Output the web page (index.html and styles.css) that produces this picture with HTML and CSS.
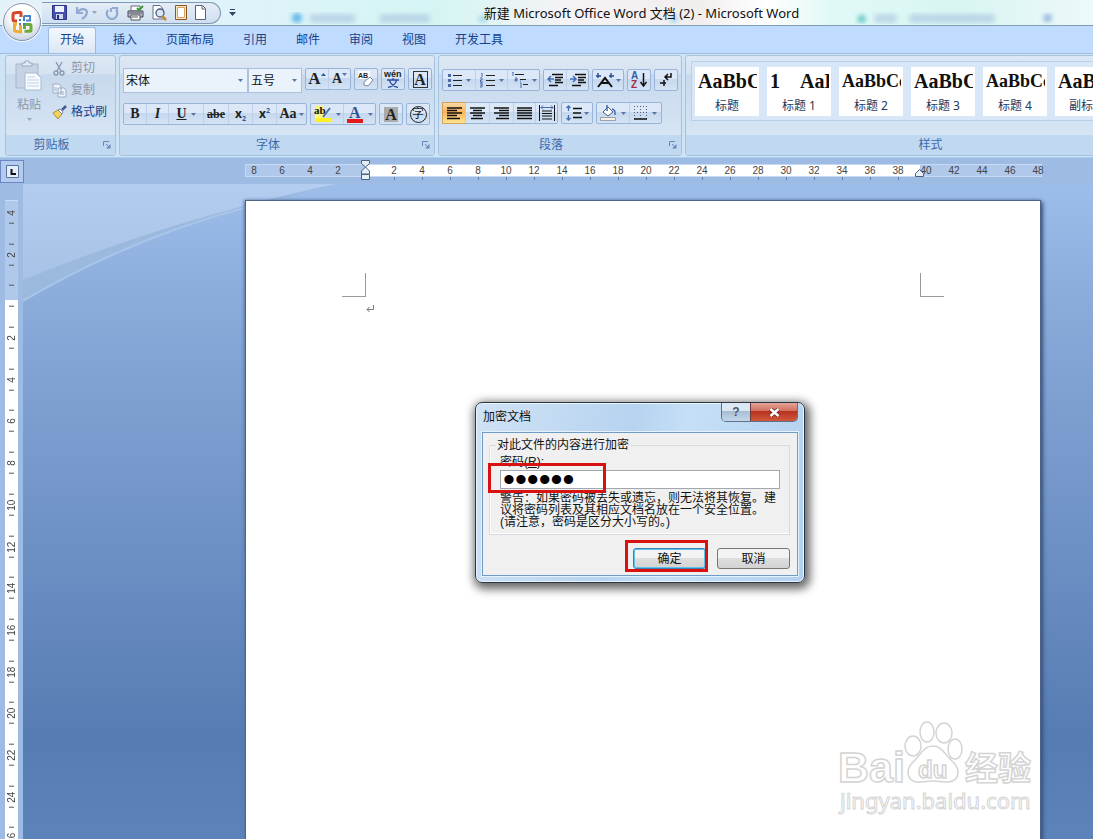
FILE: index.html
```html
<!DOCTYPE html>
<html lang="zh-CN">
<head>
<meta charset="utf-8">
<title>新建 Microsoft Office Word 文档 (2) - Microsoft Word</title>
<link rel="stylesheet" href="styles.css">
</head>
<body>
<svg class="defs" width="0" height="0" aria-hidden="true">
  <defs>
    <symbol id="down" viewBox="0 0 5 3"><path d="M0 0h5L2.500 3z" fill="#5876a3"/></symbol>
    <symbol id="launch" viewBox="0 0 8 8"><path d="M.5 5V.5H6M3 3l3 3" fill="none" stroke="#6888b5"/><path d="M7.500 3v4.500H3z" fill="#6888b5"/></symbol>
  </defs>
</svg>
<header class="titlebar">
  <button class="office" aria-label="Office">
    <svg width="24" height="24" viewBox="0 0 24 24" fill="none">
      <path d="M11 7V3.500Q11 2 9.500 2.300L4 3Q3 3.200 3 4.500V9.500Q3 11 4.500 11H7" stroke="#d6452a" stroke-width="3"/>
      <path d="M14 9V6.500Q14 6 14.500 6H20V10.500H16" stroke="#4a86cc" stroke-width="2"/>
      <path d="M7 14H4.500V20.500Q4.500 21 5.500 21.200L10.500 22V15" stroke="#f0ae35" stroke-width="3"/>
      <path d="M14.500 19V14.500H20Q21 14.500 21 15.500V20Q21 21.200 20 21.200H14.500" stroke="#6fa83a" stroke-width="3"/>
      <path d="M9 9h2v2H9zM13 9h2v2h-2zM9 13h2v2H9zM13 13h2v2h-2z" fill="#3f79c2"/>
    </svg>
  </button>
  <div class="qat">
    <button aria-label="保存"><svg width="15" height="15" viewBox="0 0 15 15"><path d="M.5 .5h14v14H2L.5 13z" fill="#454fae" stroke="#2b3384"/><path d="M3 1h9v6H3z" fill="#edf3fd"/><path d="M4 9h7v5H4z" fill="#cdd6ee"/><path d="M5 10h2v4H5z" fill="#28306f"/></svg></button>
    <button aria-label="撤消"><svg width="14" height="14" viewBox="0 0 14 14"><path d="M2 1v6h6M2 7c3-5 9-5 10-1 0 3-2 5-5 7" fill="none" stroke="#91acd0" stroke-width="2.200"/></svg></button>
    <svg class="arr" width="5" height="3"><use href="#down"/></svg>
    <button aria-label="恢复"><svg width="14" height="14" viewBox="0 0 14 14"><path d="M3 4C0 8 3 13 7 13s7-5 4-9M7 2h5v5M6 6V2" fill="none" stroke="#91acd0" stroke-width="2.200"/></svg></button>
    <button aria-label="打印"><svg width="17" height="16" viewBox="0 0 17 16"><path d="M4 1h9v5H4z" fill="#fff" stroke="#667"/><path d="M1 6h15v6H1z" fill="#b6bcc6" stroke="#454b58"/><path d="M4 10h9v5H4z" fill="#fff" stroke="#555"/><path d="M5 12h6M2 8h13" stroke="#556"/><path d="M10 3l2 2 4-4" fill="none" stroke="#3f9a36" stroke-width="2"/></svg></button>
    <button aria-label="打印预览"><svg width="15" height="16" viewBox="0 0 15 16"><path d="M1 .5h7L11 4v10H1z" fill="#fff" stroke="#667089"/><circle cx="8" cy="8" r="4" fill="#d6e8f8" stroke="#4a5a78" stroke-width="1.300"/><path d="M10 11l4 4" stroke="#c18637" stroke-width="2.500"/></svg></button>
    <button aria-label="页面"><svg width="12" height="15" viewBox="0 0 12 15"><path d="M.5 .5h11v14H.5z" fill="#f8e6c4" stroke="#85552c"/><path d="M2.500 2.500h7v10h-7z" fill="#fff" stroke="#dba35c"/></svg></button>
    <button aria-label="新建"><svg width="11" height="15" viewBox="0 0 11 15"><path d="M.5 .5h7l3 3v11H.5z" fill="#fff" stroke="#566179"/><path d="M7 1v3h3" fill="none" stroke="#566179"/></svg></button>
  </div>
  <button class="more" aria-label="自定义快速访问工具栏"><svg width="7" height="7" viewBox="0 0 7 7"><path d="M1 0h5v1H1zM0 3h7L3.500 7z" fill="#2f4468"/></svg></button>
  <svg class="glow" width="853" height="24" viewBox="0 0 853 24" preserveAspectRatio="none" aria-hidden="true">
    <defs><filter id="b"><feGaussianBlur stdDeviation="2.500"/></filter></defs>
    <g filter="url(#b)"><path d="M70 14h45v9H70zM140 14h50v9h-50zM635 14h22v9h-22zM670 14h85v9h-85z" fill="#9db8dc" opacity=".5"/><circle cx="57" cy="18" r="5" fill="#5fb5e6"/><circle cx="243" cy="19" r="4" fill="#9fd8ea"/><circle cx="434" cy="19" r="4" fill="#9fd8ea"/><circle cx="622" cy="19" r="4" fill="#5fc5c6"/><circle cx="808" cy="18" r="4" fill="#8db0dc"/></g>
  </svg>
  <h1>新建 Microsoft Office Word 文档 (2) - Microsoft Word</h1>
</header>
<nav class="tabs">
  <a href="#home" class="on">开始</a><a href="#ins">插入</a><a href="#lay">页面布局</a><a href="#ref">引用</a><a href="#mail">邮件</a><a href="#rev">审阅</a><a href="#view">视图</a><a href="#dev">开发工具</a>
</nav>
<section class="ribbon">
  <div class="group clip">
    <div class="body">
      <button class="paste" disabled><svg width="28" height="32" viewBox="0 0 28 32"><path d="M1 4h22v24H1z" fill="#c6d3e4" stroke="#a9b8cd"/><path d="M7 6V3h3V1h4v2h3v3z" fill="#e4ebf5" stroke="#98a8bf"/><path d="M10 13h11l5 5v12H10z" fill="#f7faff" stroke="#a9b8cf"/><path d="M12 17h8M12 20h12M12 23h12M12 26h12" stroke="#c4d0e2"/></svg><span>粘贴</span><svg width="5" height="3" opacity=".5"><use href="#down"/></svg></button>
      <div class="cmds">
        <button disabled><svg width="15" height="15" viewBox="0 0 15 15" fill="none" stroke="#8b9ab3" stroke-width="1.400"><path d="M4 1l5 9M10 1L5 10"/><circle cx="4" cy="12" r="2"/><circle cx="10" cy="12" r="2"/></svg>剪切</button>
        <button disabled><svg width="15" height="15" viewBox="0 0 15 15" fill="#eef3fb" stroke="#9dabc2"><path d="M1 1h6l2 2v7H1zM6 5h6l2 2v7H6z"/><path d="M2 5h3M2 7h3M8 9h4M8 11h4"/></svg>复制</button>
        <button><svg width="15" height="15" viewBox="0 0 15 15"><path d="M1 8l5-3 4 4-4 5z" fill="#f2d45c" stroke="#b78d2c"/><path d="M6 5l4 4 1-2-3-3z" fill="#fff" stroke="#7886a5"/><path d="M10 5l4-4" stroke="#4a5a92" stroke-width="2.500"/></svg>格式刷</button>
      </div>
    </div>
    <div class="cap"><span>剪贴板</span><button aria-label="剪贴板选项"><svg width="8" height="8"><use href="#launch"/></svg></button></div>
  </div>

  <div class="group font">
    <div class="body rows">
      <div class="row">
        <span class="combos"><span class="combo wide"><select aria-label="字体"><option>宋体</option></select><svg width="5" height="3"><use href="#down"/></svg></span><span class="combo"><select aria-label="字号"><option>五号</option></select><svg width="5" height="3"><use href="#down"/></svg></span></span>
        <span class="set"><button class="se" aria-label="增大字体"><b class="t16">A</b><svg class="top" width="5" height="3" viewBox="0 0 5 3"><path d="M0 3h5L2.500 0z" fill="#2c5a9c"/></svg></button><button class="se" aria-label="缩小字体"><b>A</b><svg class="top" width="5" height="3"><use href="#down"/></svg></button></span>
        <span class="set"><button aria-label="清除格式"><svg width="18" height="18" viewBox="0 0 18 18"><path d="M1 1h12v8H1z" fill="#fff"/><text x="1" y="8" class="tiny">AB</text><path d="M7 12l6-5 3 3-5 6-4-1z" fill="#fff" stroke="#7686a2"/></svg></button></span>
        <span class="set"><button aria-label="拼音指南"><svg width="18" height="18" viewBox="0 0 18 18"><text x="0" y="7" class="wen">wén</text><path d="M3 10h12M9 8v2M5.500 10.500c1 3 4 6 8.500 7M12.500 10.500c-1 3-4 6-8.500 7" fill="none" stroke="#2c4fa8" stroke-width="1.300"/></svg></button></span>
        <span class="set"><button class="se" aria-label="字符边框"><b class="boxed">A</b></button></span>
      </div>
      <div class="row">
        <span class="set"><button class="se" aria-label="加粗"><b>B</b></button><button class="se" aria-label="倾斜"><b><i>I</i></b></button><button class="se dd" aria-label="下划线"><b><u>U</u></b><svg width="5" height="3"><use href="#down"/></svg></button><button class="se w25" aria-label="删除线"><b class="t12"><s>abe</s></b></button><button class="w24" aria-label="下标"><b>x<sub>2</sub></b></button><button class="w24" aria-label="上标"><b>x<sup>2</sup></b></button><button class="se w30" aria-label="更改大小写"><b>Aa</b><svg width="5" height="3"><use href="#down"/></svg></button></span>
        <span class="set"><button class="w32" aria-label="突出显示"><svg width="18" height="18" viewBox="0 0 18 18"><path d="M1 1h9v12H1z" fill="#fbf67a"/><text x="0" y="9" class="hl">ab</text><path d="M9 12l7-9" stroke="#506fa5" stroke-width="2"/><path d="M1 13h16v4H1z" fill="#ffef24"/></svg><svg width="5" height="3"><use href="#down"/></svg></button><button class="w32" aria-label="字体颜色"><svg width="18" height="18" viewBox="0 0 18 18"><text x="3" y="13" class="fc">A</text><path d="M1 14h16v4H1z" fill="#e3191b"/></svg><svg width="5" height="3"><use href="#down"/></svg></button></span>
        <span class="set"><button class="se" aria-label="字符底纹"><b class="shade">A</b></button></span>
        <span class="set"><button aria-label="带圈字符"><span class="ring">字</span></button></span>
      </div>
    </div>
    <div class="cap"><span>字体</span><button aria-label="字体选项"><svg width="8" height="8"><use href="#launch"/></svg></button></div>
  </div>

  <div class="group para">
    <div class="body rows">
      <div class="row">
        <span class="set"><button class="w32" aria-label="项目符号"><svg width="14" height="15" viewBox="0 0 14 15"><path d="M5 2.500h9M5 7.500h9M5 12.500h9" stroke="#222"/><path d="M0 1h3v3H0zM0 6h3v3H0zM0 11h3v3H0z" fill="#4a6da8"/></svg><svg width="5" height="3"><use href="#down"/></svg></button><button class="w32" aria-label="编号"><svg width="15" height="15" viewBox="0 0 15 15"><path d="M6 2.500h9M6 7.500h9M6 12.500h9" stroke="#222"/><path d="M1 0h1v4M0 5h2v2H.5v2H3M0 10h2v4H0M0 12h2" fill="none" stroke="#4a6da8"/></svg><svg width="5" height="3"><use href="#down"/></svg></button><button class="w32" aria-label="多级列表"><svg width="17" height="16" viewBox="0 0 17 16"><path d="M4 2.500h9M9 7.500h6M12 12.500h5" stroke="#222"/><path d="M1 0h1v4M4 6h2v3H4V7.500h2M9 11h1v5M9 9h1" fill="none" stroke="#4a6da8"/></svg><svg width="5" height="3"><use href="#down"/></svg></button></span>
        <span class="set"><button aria-label="减少缩进"><svg width="16" height="14" viewBox="0 0 16 14"><path d="M5 1.500h11M8 4.500h8M8 7h6M8 9.500h8M2 12.500h9" stroke="#111" stroke-width="1.500"/><path d="M7 6H2M4 3L1 6l3 3" stroke="#426db4" stroke-width="1.500" fill="none"/></svg></button><button aria-label="增加缩进"><svg width="16" height="14" viewBox="0 0 16 14"><path d="M5 1.500h11M8 4.500h8M8 7h6M8 9.500h8M2 12.500h9" stroke="#111" stroke-width="1.500"/><path d="M0 6h6M3 3l3 3-3 3" stroke="#426db4" stroke-width="1.500" fill="none"/></svg></button></span>
        <span class="set"><button class="w30" aria-label="中文版式"><svg width="18" height="15" viewBox="0 0 18 15"><path d="M2 14l7-9 7 9M5 10h8" fill="none" stroke="#111" stroke-width="2"/><path d="M0 3h5M2 0v5M13 3h5M15 0v5" stroke="#214c91" stroke-width="1.400"/></svg><svg width="5" height="3"><use href="#down"/></svg></button></span>
        <span class="set"><button aria-label="排序"><svg width="16" height="18" viewBox="0 0 16 18"><text x="0" y="8" class="az a">A</text><text x="0" y="17" class="az z">Z</text><path d="M12.500 2v13M9.500 11l3 4 3-4" fill="none" stroke="#111" stroke-width="1.500"/></svg></button></span>
        <span class="set"><button aria-label="编辑标记"><svg width="12" height="14" viewBox="0 0 12 14"><path d="M11 0v4H6M8 1L5 4l3 3M0 10h6M4 7v6" fill="none" stroke="#111" stroke-width="1.500"/></svg></button></span>
      </div>
      <div class="row">
        <span class="set"><button class="sel" aria-label="左对齐"><svg width="15" height="13" viewBox="0 0 15 13"><path d="M0 1h15M0 3.500h10M0 6h15M0 8.500h10M0 11.500h13" stroke="#111" stroke-width="1.300"/></svg></button><button class="w24" aria-label="居中"><svg width="15" height="13" viewBox="0 0 15 13"><path d="M0 1h15M3 3.500h9M0 6h15M3 8.500h9M1 11.500h12" stroke="#111" stroke-width="1.300"/></svg></button><button class="w24" aria-label="右对齐"><svg width="15" height="13" viewBox="0 0 15 13"><path d="M0 1h15M5 3.500h10M0 6h15M5 8.500h10M2 11.500h13" stroke="#111" stroke-width="1.300"/></svg></button><button aria-label="两端对齐"><svg width="15" height="13" viewBox="0 0 15 13"><path d="M0 1h15M0 3.500h15M0 6h15M0 8.500h15M0 11.500h15" stroke="#111" stroke-width="1.300"/></svg></button><button aria-label="分散对齐"><svg width="16" height="16" viewBox="0 0 16 16"><path d="M.5 0v16M15.500 0v16M3 6h10M3 8.500h10M3 11h10M3 14h10" stroke="#111"/><path d="M2 2.500h12M4 .5l-2 2 2 2M12 .5l2 2-2 2" fill="none" stroke="#426db4"/></svg></button></span>
        <span class="set"><button class="w30" aria-label="行距"><svg width="16" height="16" viewBox="0 0 16 16"><path d="M7 3.500h9M7 8h8M7 12.500h9" stroke="#111" stroke-width="1.500"/><path d="M2.500 1v5M.5 3l2-2 2 2M2.500 10v5M.5 13l2 2 2-2" fill="none" stroke="#426db4" stroke-width="1.300"/></svg><svg width="5" height="3"><use href="#down"/></svg></button></span>
        <span class="set"><button class="w32" aria-label="底纹"><svg width="17" height="16" viewBox="0 0 17 16"><path d="M3 7l5-5 5 5-5 4z" fill="#fff" stroke="#4b5b75"/><path d="M7 0v6M12 4c4 1 3 4 3 6" fill="none" stroke="#426db4" stroke-width="1.500"/><path d="M.5 12.500h15v3H.5z" fill="#f5efe0" stroke="#9aa3b4"/></svg><svg width="5" height="3"><use href="#down"/></svg></button><button class="w32" aria-label="边框"><svg width="14" height="14" viewBox="0 0 14 14"><path d="M.5 0v13M6.500 0v13M12.500 0v13M0 .5h13M0 6.500h13" stroke="#52627c" stroke-dasharray="1 2"/><path d="M0 13h13" stroke="#111" stroke-width="1.500"/></svg><svg width="5" height="3"><use href="#down"/></svg></button></span>
      </div>
    </div>
    <div class="cap"><span>段落</span><button aria-label="段落选项"><svg width="8" height="8"><use href="#launch"/></svg></button></div>
  </div>

  <div class="group styles">
    <div class="body">
      <div class="gallery">
        <button><b>AaBbC</b><span>标题</span></button>
        <button><b>1 &nbsp; &nbsp;AaB</b><span>标题 1</span></button>
        <button><b class="two">AaBbCc</b><span>标题 2</span></button>
        <button><b>AaBbC</b><span>标题 3</span></button>
        <button><b class="two">AaBbCc</b><span>标题 4</span></button>
        <button><b>AaBb</b><span>副标题</span></button>
      </div>
    </div>
    <div class="cap"><span>样式</span></div>
  </div>
</section>

<div class="hbar">
  <button class="tabstop" aria-label="制表符"><svg width="13" height="13" viewBox="0 0 13 13"><path d="M.5 .5h12v12H.5z" fill="#e4edfa" stroke="#5b74a8"/><path d="M5.500 4v5H10" fill="none" stroke="#111" stroke-width="2"/></svg></button>
  <div class="hruler">
    <div class="nums"><span>8</span><span>6</span><span>4</span><span>2</span></div>
    <div class="nums lit"><span>2</span><span>4</span><span>6</span><span>8</span><span>10</span><span>12</span><span>14</span><span>16</span><span>18</span><span>20</span><span>22</span><span>24</span><span>26</span><span>28</span><span>30</span><span>32</span><span>34</span><span>36</span><span>38</span></div>
    <div class="nums tail"><span>40</span><span>42</span><span>44</span><span>46</span><span>48</span></div>
    <svg class="indent" width="9" height="20" viewBox="0 0 9 20" fill="#e6eef8" stroke="#4d607d"><path d="M.5 .5h8v3l-4 3.500-4-3.500zM.5 14v-3l4-4 4 4v3zM.5 14.500h8v5h-8z"/></svg>
    <svg class="rindent" width="9" height="8" viewBox="0 0 9 8" fill="#e6eef8" stroke="#4d607d"><path d="M.5 7.500V4.500l4-4 4 4v3z"/></svg>
  </div>
</div>

<main class="work">
  <div class="vbar"><div class="vruler">
    <span>4</span><span>2</span><span></span><span>2</span><span>4</span><span>6</span><span>8</span><span>10</span><span>12</span><span>14</span><span>16</span><span>18</span><span>20</span><span>22</span><span>24</span><span>26</span>
  </div></div>
  <div class="canvas">
    <svg class="wave" width="320" height="120" viewBox="0 0 320 120" aria-hidden="true"><defs><linearGradient id="w" x2="0" y2="1"><stop stop-color="#b3cdf0"/><stop offset="1" stop-color="#a7c2e6"/></linearGradient></defs><path d="M0 117Q105 55 224 23L313 0H0z" fill="#9bb9df"/><path d="M0 96Q110 51 224 21Q270 9 313 0H0z" fill="url(#w)"/><path d="M0 117Q105 55 224 23" fill="none" stroke="#a9c5e9" stroke-width="2"/></svg>
    <article class="page">
      <div class="marks"><i class="mark l"></i><i class="mark r"></i></div>
      <p class="pilcrow"><svg width="8" height="8" viewBox="0 0 8 8" fill="none" stroke="#777"><path d="M7.500 0v4.500H1M3.500 2L1 4.500 3.500 7"/></svg></p>
      <svg class="mark-logo" width="202" height="102" viewBox="0 0 202 102">
        <g fill="#fff" stroke="#d4d4d4" stroke-width="1.500">
          <text x="0" y="67" class="bai">Bai</text>
          <ellipse cx="75" cy="31" rx="8" ry="10"/><ellipse cx="89" cy="17" rx="7" ry="10"/><ellipse cx="106" cy="18" rx="8" ry="10"/><ellipse cx="117" cy="34" rx="7" ry="10"/>
          <path d="M95 31c9 0 12 9 19 15 9 8 8 20-4 21-7 0-9-1-15-1s-9 1-16 1c-10-1-12-12-4-20 8-7 10-16 20-16z"/>
          <text x="80" y="63" class="du">du</text><text x="127" y="65" class="jy">经验</text><text x="2" y="94" class="url">jingyan.baidu.com</text>
        </g>
      </svg>
    </article>
  </div>
</main>

<section class="dialog" role="dialog" aria-labelledby="dt">
  <header><h2 id="dt">加密文档</h2><div class="ctl"><button aria-label="帮助">?</button><button class="x" aria-label="关闭"><svg width="11" height="9" viewBox="0 0 11 9"><path d="M1.500 1l8 7M9.500 1l-8 7" stroke="#5c2420" stroke-width="4"/><path d="M1.500 1l8 7M9.500 1l-8 7" stroke="#fff" stroke-width="2.500"/></svg></button></div></header>
  <form>
    <fieldset>
      <legend>对此文件的内容进行加密</legend>
      <label for="pw">密码(<u>R</u>):</label>
      <input id="pw" type="password" value="123456">
      <p>警告：如果密码被丢失或遗忘，则无法将其恢复。建<br>议将密码列表及其相应文档名放在一个安全位置。<br>(请注意，密码是区分大小写的。)</p>
    </fieldset>
    <div class="acts"><button type="button" class="ok">确定</button><button type="button">取消</button></div>
  </form>
  <i class="box b1"></i><i class="box b2"></i>
</section>
</body>
</html>
```
FILE: styles.css
```css
* { box-sizing: border-box; }
body {
  margin: 0; height: 100vh; overflow: hidden; display: flex; flex-direction: column; position: relative;
  font: 12px/16px "Noto Sans", "Noto Sans CJK SC", sans-serif; color: #15428b; background: #bfdbff;
}
button { font: inherit; color: inherit; border: 0; padding: 0; margin: 0; background: none; }
svg { display: block; flex: none; }
h1, h2, p { margin: 0; font: inherit; }
.defs { position: absolute; }

.titlebar {
  position: relative; flex: none; display: flex; align-items: center; height: 26px; padding-left: 42px; gap: 8px;
  border-bottom: 1px solid #7f9db0;
  background: linear-gradient(90deg, #e3f2f8, #dff3fa 22%, #d4f5f3 40%, #f6f3f6 52%, #f2eeee 64%, #fff 70%, #e1f9f6 76%, #d8f5f2 88%, #eef8fb);
}
.qat {
  display: flex; align-items: center; gap: 8px; height: 22px; width: 179px; padding-left: 10px;
  border: 1px solid #8299b3; border-left: 0; border-radius: 0 11px 11px 0; background: linear-gradient(#e5edf6, #cfdff1);
}
.qat .arr { margin: 0 0 0 -5px; opacity: .6; }
.glow { position: absolute; right: 0; top: 0; width: 78%; }
.titlebar h1 { position: absolute; left: 0; right: 0; top: 5px; padding-left: 190px; text-align: center; font-size: 13px; color: #111; pointer-events: none; }
.office {
  position: absolute; z-index: 3; left: 3px; top: 3px; width: 38px; height: 38px; border-radius: 50%;
  display: grid; place-items: center; border: 1px solid #8494ab;
  background: radial-gradient(circle at 50% 30%, #fff 35%, #d3dbe7 75%, #aebccf); box-shadow: 0 0 0 1px #f4f8fc;
}

.tabs { flex: none; display: flex; height: 27px; padding: 1px 0 0 48px; background: #bfdbff; }
.tabs a { color: #15428b; text-decoration: none; padding: 5px 14px 0 15px; height: 26px; }
.tabs a.on { width: 48px; margin-right: 2px; padding: 4px 0 0; text-align: center; border: 1px solid #9dbbe0; border-bottom: 0; border-radius: 3px 3px 0 0; background: linear-gradient(#f2f8fe, #dbe7f5); }

.ribbon { flex: none; display: flex; gap: 3px; height: 105px; padding: 1px 0 1px 5px; overflow: hidden; background: #cfe3f6; border-top: 1px solid #9ebce0; border-bottom: 1px solid #a7cfee; }
.group {
  flex: none; display: flex; flex-direction: column; border: 1px solid #a7c2dd; border-radius: 3px; overflow: hidden;
  background: linear-gradient(#dde8f5 0, #d5e2f1 18%, #c8d9ed 19%, #dbe8f6 100%);
}
.clip { width: 111px; } .font { width: 316px; } .para { width: 244px; } .styles { flex: 1 0 495px; }
.body { flex: 1; display: flex; }
.cap { display: flex; align-items: center; height: 20px; padding-right: 4px; background: #c1d8f1; color: #3e6aaa; }
.cap span { flex: 1; padding-right: 6px; text-align: center; }
.styles .cap span { padding: 0; }
.paste { width: 46px; display: flex; flex-direction: column; align-items: center; gap: 5px; padding-top: 4px; }
button:disabled { color: #8d97a8; }
.cmds { display: flex; flex-direction: column; padding-top: 1px; }
.cmds button { display: flex; align-items: center; gap: 4px; height: 22px; }

.rows { flex-direction: column; gap: 10px; padding: 12px 3px 0; }
.para .rows { gap: 11px; padding-top: 13px; }
.row { display: flex; gap: 3px; height: 25px; }
.para .row { height: 22px; }
.set { display: flex; height: 22px; border: 1px solid #98b4d9; border-radius: 2px; background: linear-gradient(#dce8f7 45%, #c6d8ee 46%, #d4e3f5); color: #222; }
.set button { width: 22px; height: 20px; display: flex; align-items: center; justify-content: center; gap: 4px; border-left: 1px solid #bed0e8; }
.set button:first-child { border-left: 0; }
.set button.dd { width: 35px; } .set button.w25 { width: 25px; } .set button.w24 { width: 24px; }
.set button.w30 { width: 30px; gap: 2px; } .set button.w32 { width: 32px; }
.se { font-family: "Liberation Serif", serif; font-size: 14px; }
.se .t16 { font-size: 17px; } .se .t12 { font-size: 12px; }
.set .top { margin: -10px 0 0 -4px; }
sub, sup { font-size: 7px; line-height: 7px; color: #2c5a9c; }
.boxed { border: 1px solid #333; width: 15px; line-height: 15px; font-size: 16px; }
.shade { background: #aaa; width: 14px; line-height: 15px; font-size: 16px; }
.ring { width: 17px; height: 17px; border: 1px solid #222; border-radius: 50%; font-size: 12px; line-height: 14px; }
.tiny { font: bold 7px "Liberation Sans", sans-serif; fill: #222; }
.wen { font: bold 9px "Liberation Sans", sans-serif; fill: #222; }
.hl { font: bold 11px "Liberation Serif", serif; fill: #111; }
.fc { font: bold 16px "Liberation Serif", serif; fill: #2f5496; }
.az { font: bold 10px "Liberation Sans", sans-serif; } .a { fill: #2f5ca8; } .z { fill: #a52f3c; }
.set .sel { background: linear-gradient(#fcd9a5, #f9b35a 45%, #fde58f); outline: 1px solid #d3a35d; }
.combos { display: flex; }
.combo { position: relative; display: flex; width: 54px; height: 25px; }
.combo.wide { width: 125px; }
.combo select { appearance: none; width: 100%; border: 1px solid #abc1de; border-radius: 0; background: #eaf2fb; padding: 0 2px; font: inherit; color: #111; }
.combo svg { position: absolute; right: 5px; top: 11px; }

.gallery { flex: 1; display: flex; gap: 8px; height: 60px; margin: 5px 0 0 5px; padding: 5px 0 5px 3px; border: 1px solid #b9d0ed; background: #d8e7f7; }
.gallery button { flex: none; width: 64px; height: 49px; background: #fff; overflow: hidden; color: #1e395b; }
.gallery b { display: block; width: 59px; margin: 0 0 6px 3px; overflow: hidden; white-space: nowrap; text-align: left; font: bold 20px/22px "Liberation Serif", serif; color: #111; }
.gallery b.two { font-size: 18px; }
.gallery span { display: block; }

.hbar { flex: none; display: flex; height: 26px; background: #9dbbe3; padding-top: 2px; }
.tabstop { flex: none; width: 24px; height: 23px; border: 1px solid #6a86c4; background: #b5cbee; display: grid; place-items: center; }
.hruler { position: relative; flex: 1; min-width: 0; display: flex; height: 13px; margin: 4px 51px 0 221px; border: 1px solid #c6daf5; background: #b0c8ea; font: 10px/11px "Liberation Sans", sans-serif; color: #444; }
.nums { flex: none; display: flex; height: 11px; }
.nums span { width: 28px; text-align: center; }
.nums:first-child { width: 126px; margin-left: -6px; }
.lit { background: #fff; width: 554px; padding-left: 14px; }
.lit span { height: 15px; background: linear-gradient(#5f7da8, #5f7da8) 50% 100% / 1px 3px no-repeat; }
.tail { margin-left: -8px; }
.indent { position: absolute; left: 115px; top: -5px; }
.rindent { position: absolute; left: 669px; top: 4px; }

.work { flex: 1; min-height: 0; display: flex; overflow: hidden; background: #9dbbe3; }
.vbar { flex: none; width: 23px; padding: 15px 5px 0; }
.vruler { display: flex; flex-direction: column; height: calc(100% + 27px); margin-top: -7px; background: linear-gradient(#9dbbe3 8px, #c9dcf6 8px, #c9dcf6 9px, #b0c8ea 9px, #b0c8ea 108px, #fff 108px); font: 10px "Liberation Sans", sans-serif; color: #444; }
.vruler span {
  flex: 1; min-height: 0; writing-mode: vertical-rl; transform: rotate(180deg); text-align: center; line-height: 13px;
  background: linear-gradient(#555, #555) 50% 10px / 5px 1px no-repeat, linear-gradient(#555, #555) 50% calc(100% - 10px) / 5px 1px no-repeat;
}
.vruler span:first-child { background: linear-gradient(#555, #555) 50% 10px / 5px 1px no-repeat; }
.canvas { position: relative; flex: 1; display: flex; padding: 16px 52px 0 222px; background: linear-gradient(#9dbeea, #84a5d5 25%, #6a8dc2 60%, #557cb3 85%, #5c84bb); }
.wave { position: absolute; left: 0; top: 0; }
.page { position: relative; flex: 1; background: #fff; border: 1px solid #4e6484; border-bottom: 0; padding: 72px 96px 0; box-shadow: 2px 2px 4px #35507c, -1px 0 3px #5f7fae; }
.marks { display: flex; justify-content: space-between; }
.mark { width: 24px; height: 24px; border-bottom: 1px solid #999; }
.mark.l { border-right: 1px solid #999; } .mark.r { border-left: 1px solid #999; }
.pilcrow { padding: 8px 0 0 24px; }
.mark-logo { position: absolute; right: 0; bottom: 22px; overflow: visible; }
.bai { font: bold 43px "Liberation Sans", sans-serif; }
.du { font: bold 24px "Liberation Sans", sans-serif; }
.jy { font: bold 33px "Noto Sans CJK SC", sans-serif; }
.url { font: 22px "Noto Sans", sans-serif; stroke-width: 1px; }

.dialog {
  position: absolute; left: 475px; top: 402px; width: 330px; padding: 0 6px 6px; color: #111;
  font-family: "Liberation Sans", "Noto Sans CJK SC", sans-serif;
  border: 1px solid #2c3642; border-radius: 7px; box-shadow: 2px 3px 10px 3px #666, inset 0 0 0 1px #eaf6ff;
  background: linear-gradient(100deg, #cfe2f5, #b7d3f0 45%, #c5dff6 60%, #b2d0f0);
}
.dialog header { display: flex; justify-content: space-between; height: 29px; }
.dialog h2 { padding: 6px 0 0 1px; }
.ctl { display: flex; height: 19px; border: 1px solid #5f7188; border-top: 0; border-radius: 0 0 5px 5px; overflow: hidden; }
.ctl button { width: 28px; font-weight: bold; color: #4b586b; background: linear-gradient(#dbe7f3 45%, #a9bdd3 46%, #c4d7ea); }
.ctl .x { width: 47px; display: grid; place-items: center; border-left: 1px solid #6c3a3c; background: linear-gradient(#e3a597, #cf6f5c 45%, #b8311f 46%, #cf5a3c); }
form { padding: 5px 7px 6px 6px; background: #f0f0f0; border: 1px solid #6f9cc4; box-shadow: 0 0 0 1px #e4f2fd; }
fieldset { margin: 0; padding: 0 9px 6px 10px; border: 1px solid #dadada; box-shadow: inset 1px -1px #fff; min-width: 0; }
legend { padding: 0 1px; margin-left: -4px; line-height: 14px; }
label { display: block; line-height: 16px; padding-top: 2px; }
input { display: block; width: 100%; height: 19px; border: 1px solid #a3a8ae; background: #fff; padding: 0 2px; margin: 0; font: 34px/17px "Liberation Sans", sans-serif; color: #000; }
fieldset p { line-height: 12px; padding-top: 3px; white-space: nowrap; }
.acts { display: flex; justify-content: flex-end; gap: 11px; padding-top: 13px; }
.acts button { width: 73px; height: 21px; border: 1px solid #777; border-radius: 3px; background: linear-gradient(#f3f3f3 48%, #dedede 50%, #d2d2d2); }
.acts .ok { border-color: #3c7fb1; box-shadow: inset 0 0 0 1px #5fc4ec; }
.box { position: absolute; border: 3px solid #d81111; pointer-events: none; }
.b1 { left: 12px; top: 60px; width: 118px; height: 30px; }
.b2 { left: 149px; top: 137px; width: 83px; height: 32px; }
```
